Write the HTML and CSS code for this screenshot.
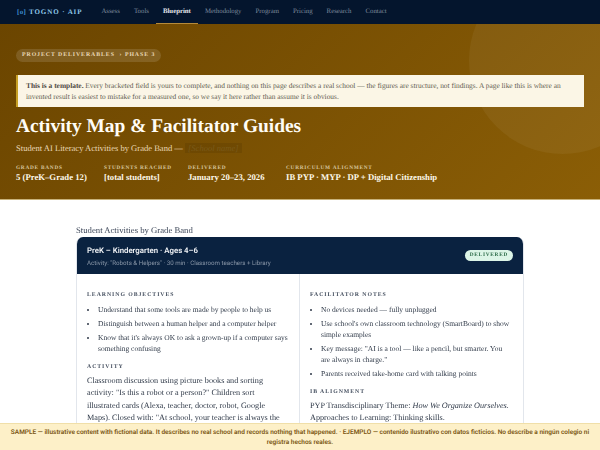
FILE: index.html
```html
<!DOCTYPE html>
<html lang="en">
<head>
  <meta charset="UTF-8">
  <meta name="viewport" content="width=device-width, initial-scale=1.0">
  <title>Activity Map &amp; Facilitator Guides</title>
  <link rel="stylesheet" href="styles.css">
</head>
<body>
  <nav class="nav">
    <a class="brand" href="#"><span class="brand-mark">[o]</span>TOGNO · AIP</a>
    <div class="nav-links">
      <a href="#">Assess</a>
      <a href="#">Tools</a>
      <a href="#" class="active">Blueprint</a>
      <a href="#">Methodology</a>
      <a href="#">Program</a>
      <a href="#">Pricing</a>
      <a href="#">Research</a>
      <a href="#">Contact</a>
    </div>
  </nav>

  <header class="hero">
    <div class="hero-circle"></div>
    <div class="badge">PROJECT DELIVERABLES &nbsp;› PHASE 3</div>
    <div class="notice">
      <strong>This is a template.</strong> Every bracketed field is yours to complete, and nothing on this page describes a real school — the figures are structure, not findings. A page like this is where an invented result is easiest to mistake for a measured one, so we say it here rather than assume it is obvious.
    </div>
    <h1>Activity Map &amp; Facilitator Guides</h1>
    <p class="subtitle">Student AI Literacy Activities by Grade Band — <span class="placeholder">[School name]</span></p>
    <div class="stats">
      <div class="stat">
        <div class="stat-label">GRADE BANDS</div>
        <div class="stat-value">5 (PreK–Grade 12)</div>
      </div>
      <div class="stat">
        <div class="stat-label">STUDENTS REACHED</div>
        <div class="stat-value">[total students]</div>
      </div>
      <div class="stat">
        <div class="stat-label">DELIVERED</div>
        <div class="stat-value">January 20–23, 2026</div>
      </div>
      <div class="stat">
        <div class="stat-label">CURRICULUM ALIGNMENT</div>
        <div class="stat-value">IB PYP · MYP · DP + Digital Citizenship</div>
      </div>
    </div>
  </header>

  <main class="content">
    <h2>Student Activities by Grade Band</h2>
    <section class="card">
      <div class="card-head">
        <div>
          <div class="card-title">PreK – Kindergarten · Ages 4–6</div>
          <div class="card-sub">Activity: "Robots &amp; Helpers" · 30 min · Classroom teachers + Library</div>
        </div>
        <span class="pill">DELIVERED</span>
      </div>
      <div class="card-body">
        <div class="col">
          <h3>LEARNING OBJECTIVES</h3>
          <ul>
            <li>Understand that some tools are made by people to help us</li>
            <li>Distinguish between a human helper and a computer helper</li>
            <li>Know that it's always OK to ask a grown-up if a computer says something confusing</li>
          </ul>
          <h3>ACTIVITY</h3>
          <p>Classroom discussion using picture books and sorting activity: "Is this a robot or a person?" Children sort illustrated cards (Alexa, teacher, doctor, robot, Google Maps). Closed with: "At school, your teacher is always the boss of the classroom."</p>
        </div>
        <div class="col">
          <h3>FACILITATOR NOTES</h3>
          <ul>
            <li>No devices needed — fully unplugged</li>
            <li>Use school's own classroom technology (SmartBoard) to show simple examples</li>
            <li>Key message: "AI is a tool — like a pencil, but smarter. You are always in charge."</li>
            <li>Parents received take-home card with talking points</li>
          </ul>
          <h3>IB ALIGNMENT</h3>
          <p>PYP Transdisciplinary Theme: <em>How We Organize Ourselves.</em> Approaches to Learning: Thinking skills.</p>
        </div>
      </div>
    </section>
  </main>

  <div class="sample-bar">SAMPLE — illustrative content with fictional data. It describes no real school and records nothing that happened. · EJEMPLO — contenido ilustrativo con datos ficticios. No describe a ningún colegio ni registra hechos reales.</div>
</body>
</html>
```

FILE: styles.css
```css
:root {
  --navy: #0a2240;
  --nav-bg: #04152d;
  --gold: #c9a227;
  --text: #2f3948;
  --serif: "Liberation Serif", "DejaVu Serif", serif;
  --sans: Roboto, "Noto Sans", sans-serif;
}
html, body {
  overflow: hidden;
  height: 100%;
}
body {
  margin: 0;
  font-family: var(--serif);
  background: white;
  color: var(--text);
  text-rendering: geometricPrecision;
}
.nav {
  display: flex;
  align-items: stretch;
  height: 24px;
  padding: 0 17px;
  background: var(--nav-bg);
}
.brand {
  display: flex;
  align-items: center;
  gap: 3px;
  margin-right: 12px;
  padding-bottom: 1px;
  color: #8fc7e8;
  font-size: 7px;
  font-weight: bold;
  letter-spacing: 0.9px;
  text-decoration: none;
}
.brand-mark {
  color: #3f8fd0;
  letter-spacing: 0.3px;
}
.nav-links {
  display: flex;
}
.nav-links a {
  display: flex;
  align-items: center;
  padding: 0 7px 1px;
  color: #7d8a9c;
  font-size: 6.8px;
  text-decoration: none;
  border-bottom: 1px solid transparent;
  box-sizing: border-box;
}
.nav-links a.active {
  color: #e6e9ee;
  font-weight: bold;
  border-bottom-color: #b58a3a;
}
.hero {
  position: relative;
  overflow: hidden;
  height: 176px;
  box-sizing: border-box;
  padding: 25px 16px 0;
  background: linear-gradient(135deg, #6b4500, #8b5e06);
  border-bottom: 1px solid #c8b27a;
}
.hero-circle {
  position: absolute;
  top: -57px;
  right: -56px;
  width: 187px;
  height: 187px;
  border-radius: 50%;
  background: rgba(255, 255, 255, 0.05);
}
.badge {
  position: relative;
  width: fit-content;
  padding: 0 6px;
  height: 13px;
  line-height: 13px;
  border-radius: 7px;
  background: rgba(255, 255, 255, 0.13);
  color: #ead9b8;
  font-size: 5.8px;
  font-weight: bold;
  letter-spacing: 0.95px;
}
.notice {
  position: relative;
  margin-top: 13px;
  padding: 5px 8px;
  background: #fdf8e9;
  border-left: 2px solid var(--gold);
  color: #625c52;
  font-size: 7.4px;
  line-height: 11px;
  opacity: 0.99;
}
.notice strong {
  color: #4e4a44;
}
h1 {
  position: relative;
  margin: 8px 0 0;
  color: #fffdf6;
  font-size: 19.4px;
  line-height: 24px;
}
.subtitle {
  position: relative;
  margin: 3px 0 0;
  color: #ead9b8;
  font-size: 8.55px;
  line-height: 12px;
}
.placeholder {
  padding: 0 3px;
  background: rgba(0, 0, 0, 0.08);
  color: #7a5a1a;
  font-style: italic;
}
.stats {
  position: relative;
  display: grid;
  grid-template-columns: 72px 68px 82px auto;
  gap: 16px;
  margin-top: 11px;
}
.stat-label {
  color: #d8c69f;
  font-size: 5.3px;
  font-weight: bold;
  letter-spacing: 0.75px;
  line-height: 7px;
}
.stat-value {
  color: #fdf8e9;
  font-size: 8.7px;
  font-weight: bold;
  line-height: 11px;
}
.content {
  width: 448px;
  margin: 24px auto 0;
  will-change: transform;
}
h2 {
  margin: 0 0 1px;
  color: #3c4658;
  font-size: 8.7px;
  font-weight: normal;
  line-height: 12px;
}
.card {
  border: 1px solid #e2e6ec;
  border-top: 0;
  border-radius: 7px 7px 0 0;
  overflow: hidden;
}
.card-head {
  display: flex;
  justify-content: space-between;
  align-items: center;
  height: 37px;
  padding: 0 10px;
  background: var(--navy);
}
.card-title {
  color: #f2f4f7;
  font-family: var(--sans);
  font-size: 7.8px;
  font-weight: 600;
  line-height: 11px;
}
.card-sub {
  margin-top: 3px;
  color: #8a97a8;
  font-family: var(--sans);
  font-size: 6.2px;
  line-height: 8px;
}
.pill {
  padding: 0 5px;
  height: 11px;
  line-height: 11px;
  border-radius: 6px;
  background: #dcf5e7;
  color: #2c6b48;
  font-size: 5.3px;
  font-weight: bold;
  letter-spacing: 0.75px;
}
.card-body {
  display: grid;
  grid-template-columns: 222px 1fr;
}
.col {
  padding: 17px 10px;
}
.col + .col {
  border-left: 1px solid #e2e6ec;
}
h3 {
  margin: 0;
  color: #465060;
  font-size: 5.8px;
  font-weight: bold;
  letter-spacing: 0.95px;
  line-height: 9px;
}
ul {
  margin: 4px 0 9px;
  padding-left: 11px;
}
li {
  font-size: 7.5px;
  line-height: 11px;
  margin-bottom: 3px;
}
p {
  margin: 3px 0 0;
  font-size: 8.2px;
  line-height: 12.3px;
}
.sample-bar {
  position: fixed;
  left: 0;
  right: 0;
  bottom: 0;
  padding: 3px 10px;
  background: #fdf0c8;
  border-top: 1px solid #f0dfa8;
  color: #7a5510;
  font-family: var(--sans);
  font-size: 6.5px;
  font-weight: 600;
  line-height: 10px;
  text-align: center;
  opacity: 0.99;
}
```
